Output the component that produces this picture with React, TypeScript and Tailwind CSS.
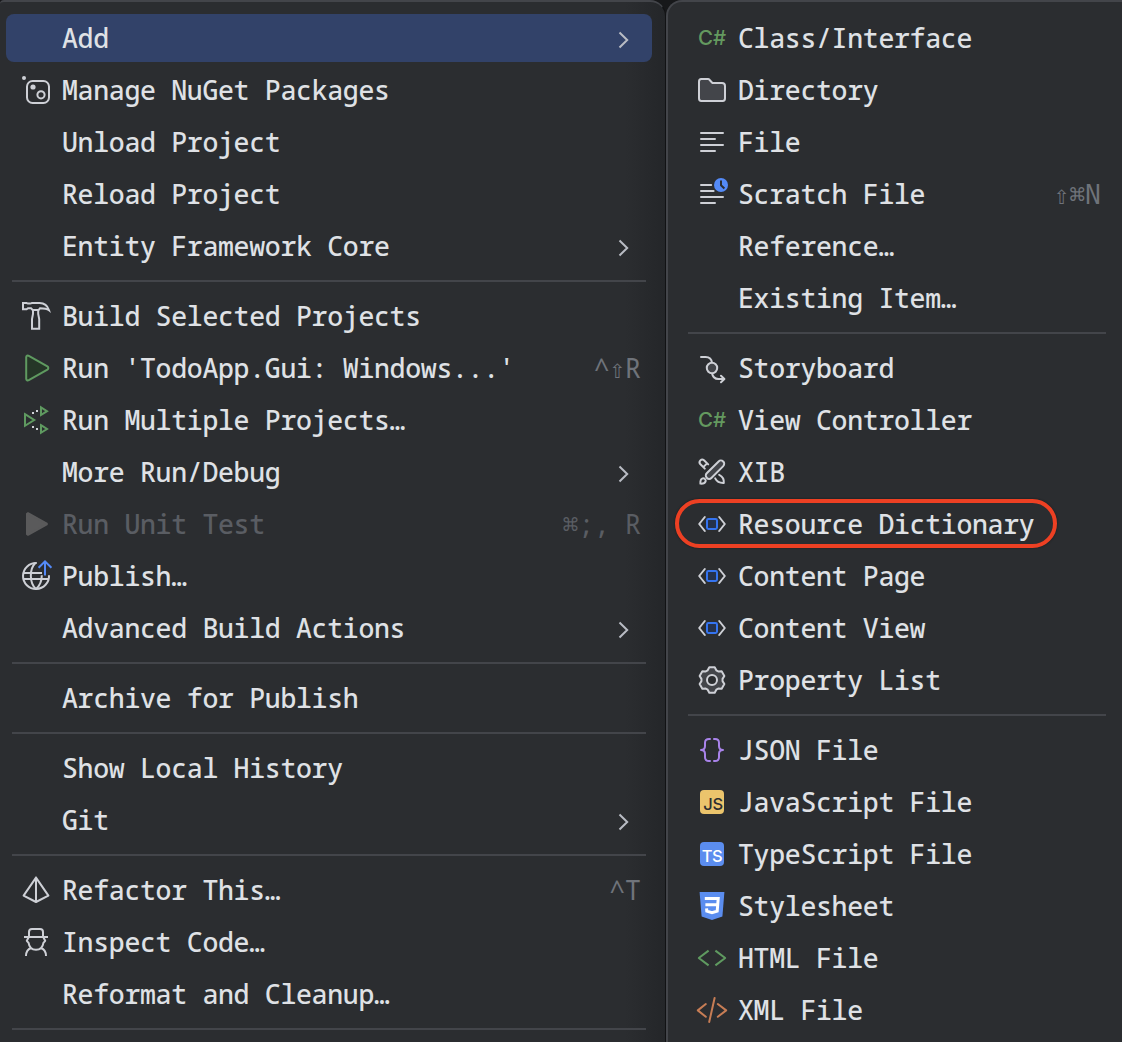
import type { ReactNode } from 'react';

const LIGHT = '#CED0D6';
const GREEN = '#5F9A60';

function Icon({ children }: { children: ReactNode }) {
  return (
    <svg className="block size-8 overflow-visible" viewBox="0 0 16 16" fill="none" stroke={LIGHT} strokeLinecap="round" strokeLinejoin="round">
      {children}
    </svg>
  );
}

const NuGet = () => (
  <Icon>
    <circle cx="2" cy="2" r="1" fill={LIGHT} stroke="none" />
    <rect x="3.5" y="3.5" width="11" height="11" rx="2.8" />
    <circle cx="6.5" cy="6.5" r="1.3" fill={LIGHT} stroke="none" />
    <circle cx="10.5" cy="10.4" r="1.8" />
  </Icon>
);

const Hammer = () => (
  <Icon>
    <path
      strokeLinejoin="miter"
      d="M1.5 1.5H3.3L4 1.8H5L6 1.5H9.8C12 1.5 13.8 2.9 14.5 5.1C13.2 4.1 12.2 4.1 10 4.1L9.3 5H6.3L5.5 4.1H4L3.3 4.6H1.5Z"
    />
    <path strokeLinejoin="miter" d="M6.5 5V7L6 9.5V14.4H9.6V9.5L9.1 7V5" />
  </Icon>
);

const Run = () => (
  <Icon>
    <path d="M3.1 2.6C3.1 1.9 3.8 1.6 4.4 1.9L13.7 7.2C14.3 7.6 14.3 8.4 13.7 8.8L4.4 14.1C3.8 14.4 3.1 14.1 3.1 13.4Z" fill="#253627" stroke={GREEN} />
  </Icon>
);

const RunMultiple = () => (
  <Icon>
    <g stroke={GREEN} strokeLinejoin="miter">
      <path d="M2.5 5.1L7.1 8L2.5 10.9Z" />
      <path d="M10.5 1.7L13.5 3.6L10.5 5.5Z" />
      <path d="M10.5 10.6L13.5 12.5L10.5 14.4Z" />
    </g>
    <g fill={LIGHT} stroke="none">
      <rect x="6" y="4" width="1" height="1" />
      <rect x="8" y="3" width="1" height="1" />
      <rect x="6" y="11" width="1" height="1" />
      <rect x="8" y="12" width="1" height="1" />
    </g>
  </Icon>
);

const RunDisabled = () => (
  <Icon>
    <path d="M3.5 2.9L4 2.6L13.4 7.8V8.2L4 13.4L3.5 13.1Z" fill="#5A5A5B" stroke="#5A5A5B" />
  </Icon>
);

const Publish = () => (
  <Icon>
    <path strokeLinecap="butt" d="M8.4 1.5A6.5 6.5 0 1 0 14.5 7.6" />
    <path strokeLinecap="butt" d="M2 6.5H11M2 9.5H14" />
    <path strokeLinecap="butt" d="M7.7 1.5C4.6 4.5 4.6 11.5 8 14.5C10.1 12.6 10.9 10.2 10.9 7.6" />
    <path stroke="#548AF7" strokeLinecap="butt" strokeLinejoin="miter" d="M12.5 7.8V1M9.3 3.9L12.5 .7L15.7 3.9" />
  </Icon>
);

const Refactor = () => (
  <Icon>
    <path d="M8 1.8L14.2 10.8L8 14L1.8 10.8ZM8 1.8V14" />
  </Icon>
);

const Inspect = () => (
  <Icon>
    <path strokeLinecap="butt" d="M2 5.5H14M4.5 5.5V3C4.5 2.1 5.1 1.5 6 1.5H10C10.9 1.5 11.5 2.1 11.5 3V5.5" />
    <path d="M4.2 5.9L3.4 7.4L4.3 8.4C4.6 10.5 6 11.9 8 11.9C10 11.9 11.4 10.5 11.7 8.4L12.6 7.4L11.8 5.9" />
    <path strokeLinecap="butt" d="M5.6 11C4.2 11.5 3 12.8 3 15M10.4 11C11.8 11.5 13 12.8 13 15" />
  </Icon>
);

const CSharp = () => (
  <span className="-ml-0.5 block w-9 text-center font-['Inter'] text-[20.5px] leading-8 font-medium tracking-normal text-[#64995F]">C#</span>
);

const Folder = () => (
  <Icon>
    <path
      fill="#43454A"
      d="M8.1 4.35L8.25 4.5H13C13.83 4.5 14.5 5.17 14.5 6V12.13C14.5 12.95 13.93 13.5 13.37 13.5H2.63C2.07 13.5 1.5 12.95 1.5 12.13V3.87C1.5 3.05 2.07 2.5 2.63 2.5H6.12C6.26 2.5 6.39 2.56 6.48 2.65Z"
    />
  </Icon>
);

const FileLines = () => (
  <Icon>
    <path d="M2.5 3.5H13.5M2.5 6.5H9.5M2.5 9.5H13.5M2.5 12.5H9.5" />
  </Icon>
);

const Scratch = () => (
  <Icon>
    <path d="M2.5 3.5H7.6M2.5 6.5H8.8M2.5 9.5H13.5M2.5 12.5H9.5" />
    <circle cx="12.5" cy="3.5" r="3.5" fill="#548AF7" stroke="none" />
    <path stroke="#2B2D30" strokeLinecap="butt" d="M12.5 1.2V3.6L14.2 5.2" />
  </Icon>
);

const Storyboard = () => (
  <Icon>
    <path d="M2.5 2.5H4.8C6.8 2.5 7.8 3.5 8 5.5M8 10.5C8.3 12.5 9.5 13.5 11.2 13.5H14M12.5 11.9L14.2 13.5L12.5 15.1" />
    <circle cx="8" cy="8" r="2.6" fill="#43454A" />
  </Icon>
);

const Xib = () => (
  <Icon>
    <path d="M6.1 4.2L4 2.1A1.35 1.35 0 0 0 2.1 4L4.4 6.3M3.9 5.3L5.4 3.8" />
    <path d="M9.6 11.2C10.3 12.6 11.6 13.6 13.9 13.5C14.1 11.6 13.2 10.2 11.6 9.4" />
    <rect x="3.7" y="5.2" width="11.6" height="3.3" rx="1.6" transform="rotate(-45 9.5 6.85)" fill="#43454A" />
    <path d="M2.2 13.8C2.1 12.4 2.4 11.5 3.3 11.2C4.2 11 5.1 11.9 4.8 12.7C4.5 13.6 3.6 13.9 2.2 13.8Z" />
  </Icon>
);

const Markup = () => (
  <Icon>
    <path d="M4.4 4.5L1.6 8L4.4 11.5M11.6 4.5L14.4 8L11.6 11.5" />
    <rect x="5.5" y="5.5" width="5" height="5" rx=".7" fill="#25324D" stroke="#3574F0" />
  </Icon>
);

const gearPath =
  [-90, -30, 30, 90, 150, 210]
    .flatMap((a) =>
      [
        [-24, 5.3],
        [-12, 6.5],
        [12, 6.5],
        [24, 5.3],
      ].map(([d, r]) => {
        const t = ((a + d) * Math.PI) / 180;
        return `${(8 + r * Math.cos(t)).toFixed(2)} ${(8 + r * Math.sin(t)).toFixed(2)}`;
      }),
    )
    .reduce((path, p, i) => path + (i ? 'L' : 'M') + p, '') + 'Z';

const Gear = () => (
  <Icon>
    <path d={gearPath} fill="#43454A" />
    <circle cx="8" cy="8" r="2.5" fill="#2B2D30" />
  </Icon>
);

const Json = () => (
  <Icon>
    <path
      stroke="#A983EA"
      d="M7 2.5H6.5C5.2 2.5 4.5 3.2 4.5 4.4V6C4.5 7.3 3.8 8 2.5 8C3.8 8 4.5 8.7 4.5 10V11.6C4.5 12.8 5.2 13.5 6.5 13.5H7M9 2.5H9.5C10.8 2.5 11.5 3.2 11.5 4.4V6C11.5 7.3 12.2 8 13.5 8C12.2 8 11.5 8.7 11.5 10V11.6C11.5 12.8 10.8 13.5 9.5 13.5H9"
    />
  </Icon>
);

const JsBadge = () => (
  <span className="mx-auto block h-6 w-6 rounded-[4px] bg-[#EBC46C] pt-1 pl-0.5 text-center font-['Inter'] text-[16.5px] leading-5 font-medium tracking-[-0.3px] text-[#2B2D30]">JS</span>
);

const TsBadge = () => (
  <span className="mx-auto block h-6 w-6 rounded-[4px] bg-[#5B8DEF] pt-1 text-center font-['Inter'] text-[16.5px] leading-5 font-medium tracking-[-0.4px] text-white">TS</span>
);

const Css = () => (
  <Icon>
    <path d="M1.8 1H14.2L13.2 13.3L8 15L2.8 13.3Z" fill="#5B8DEF" stroke="none" />
    <path stroke="#fff" strokeWidth="1.5" strokeLinecap="butt" strokeLinejoin="miter" d="M4.4 4.3H11.1L10.6 10.6L8 11.4L5.4 10.6L5.3 9.2M4.7 7.4H10.8" />
  </Icon>
);

const Html = () => (
  <Icon>
    <path stroke={GREEN} strokeLinecap="butt" d="M6.3 4.3L1.4 8L6.3 11.7M9.7 4.3L14.6 8L9.7 11.7" />
  </Icon>
);

const Xml = () => (
  <Icon>
    <path stroke="#C77D55" d="M4.9 5L.9 8.2L4.9 11.4M10.9 5L15.1 8.2L10.9 11.4M9.3 2L6.6 14" />
  </Icon>
);

type Item = {
  label: string;
  icon?: ReactNode;
  keys?: string;
  submenu?: boolean;
  active?: boolean;
  disabled?: boolean;
  ringed?: boolean;
};

const projectMenu: Item[][] = [
  [
    { label: 'Add', submenu: true, active: true },
    { label: 'Manage NuGet Packages', icon: <NuGet /> },
    { label: 'Unload Project' },
    { label: 'Reload Project' },
    { label: 'Entity Framework Core', submenu: true },
  ],
  [
    { label: 'Build Selected Projects', icon: <Hammer /> },
    { label: "Run 'TodoApp.Gui: Windows...'", icon: <Run />, keys: '^⇧R' },
    { label: 'Run Multiple Projects…', icon: <RunMultiple /> },
    { label: 'More Run/Debug', submenu: true },
    { label: 'Run Unit Test', icon: <RunDisabled />, keys: '⌘;, R', disabled: true },
    { label: 'Publish…', icon: <Publish /> },
    { label: 'Advanced Build Actions', submenu: true },
  ],
  [{ label: 'Archive for Publish' }],
  [{ label: 'Show Local History' }, { label: 'Git', submenu: true }],
  [
    { label: 'Refactor This…', icon: <Refactor />, keys: '^T' },
    { label: 'Inspect Code…', icon: <Inspect /> },
    { label: 'Reformat and Cleanup…' },
  ],
  [],
];

const addMenu: Item[][] = [
  [
    { label: 'Class/Interface', icon: <CSharp /> },
    { label: 'Directory', icon: <Folder /> },
    { label: 'File', icon: <FileLines /> },
    { label: 'Scratch File', icon: <Scratch />, keys: '⇧⌘N' },
    { label: 'Reference…' },
    { label: 'Existing Item…' },
  ],
  [
    { label: 'Storyboard', icon: <Storyboard /> },
    { label: 'View Controller', icon: <CSharp /> },
    { label: 'XIB', icon: <Xib /> },
    { label: 'Resource Dictionary', icon: <Markup />, ringed: true },
    { label: 'Content Page', icon: <Markup /> },
    { label: 'Content View', icon: <Markup /> },
    { label: 'Property List', icon: <Gear /> },
  ],
  [
    { label: 'JSON File', icon: <Json /> },
    { label: 'JavaScript File', icon: <JsBadge /> },
    { label: 'TypeScript File', icon: <TsBadge /> },
    { label: 'Stylesheet', icon: <Css /> },
    { label: 'HTML File', icon: <Html /> },
    { label: 'XML File', icon: <Xml /> },
  ],
];

function Row({ item }: { item: Item }) {
  return (
    <div className={`relative my-0.5 flex h-12 shrink-0 items-center rounded-lg pl-3.5 ${item.active ? 'bg-[#324269]' : ''} ${item.disabled ? 'text-[#5A5D63]' : 'text-[#DFE1E5]'}`}>
      <span className="mr-2.5 w-8 shrink-0">{item.icon}</span>
      <span className="font-medium whitespace-pre">{item.label}</span>
      {item.submenu && (
        <svg className="mt-1 mr-5 ml-auto h-5 w-4" viewBox="0 0 16 20" fill="none" stroke="#B9BCC4" strokeWidth="2">
          <path d="M3.5 2.5L11.2 10L3.5 17.5" />
        </svg>
      )}
      {item.keys && <span className={`mr-[11.5px] ml-auto whitespace-pre ${item.disabled ? '' : 'text-[#6F737A]'}`}>{item.keys}</span>}
      {item.ringed && <span className="absolute -top-px left-[-7px] h-[49px] w-[382px] rounded-full border-4 border-[#ED4023] shadow-[0_0_2px_#161719]" />}
    </div>
  );
}

function Menu({ groups }: { groups: Item[][] }) {
  return groups.map((group, i) => (
    <div key={i} className="flex shrink-0 flex-col">
      {i > 0 && <div className="mx-1.5 my-2 h-0.5 shrink-0 bg-[#43454A]" />}
      {group.map((item) => (
        <Row key={item.label} item={item} />
      ))}
    </div>
  ));
}

export default function App() {
  return (
    <div className="flex h-[1042px] w-[1122px] overflow-hidden bg-[#17181A] font-['Noto_Sans_Mono','DejaVu_Sans_Mono','Liberation_Mono',monospace] text-[26.5px] leading-none tracking-[-0.3px]">
      <div className="flex h-[1060px] w-[666px] shrink-0 flex-col rounded-tl-[4px] rounded-tr-2xl border-t-2 border-r border-t-[#43454A] border-r-[#111214] bg-[#2B2D30] bg-linear-to-l from-[#242629] to-[#2B2D30] to-6% pt-2.5 pr-[13px] pl-1.5">
        <Menu groups={projectMenu} />
      </div>
      <div className="flex h-[1060px] w-[480px] shrink-0 flex-col rounded-tl-2xl border-t-2 border-l-2 border-[#43454A] bg-[#2B2D30] pt-2.5 pr-[34px] pl-3.5">
        <Menu groups={addMenu} />
      </div>
    </div>
  );
}
